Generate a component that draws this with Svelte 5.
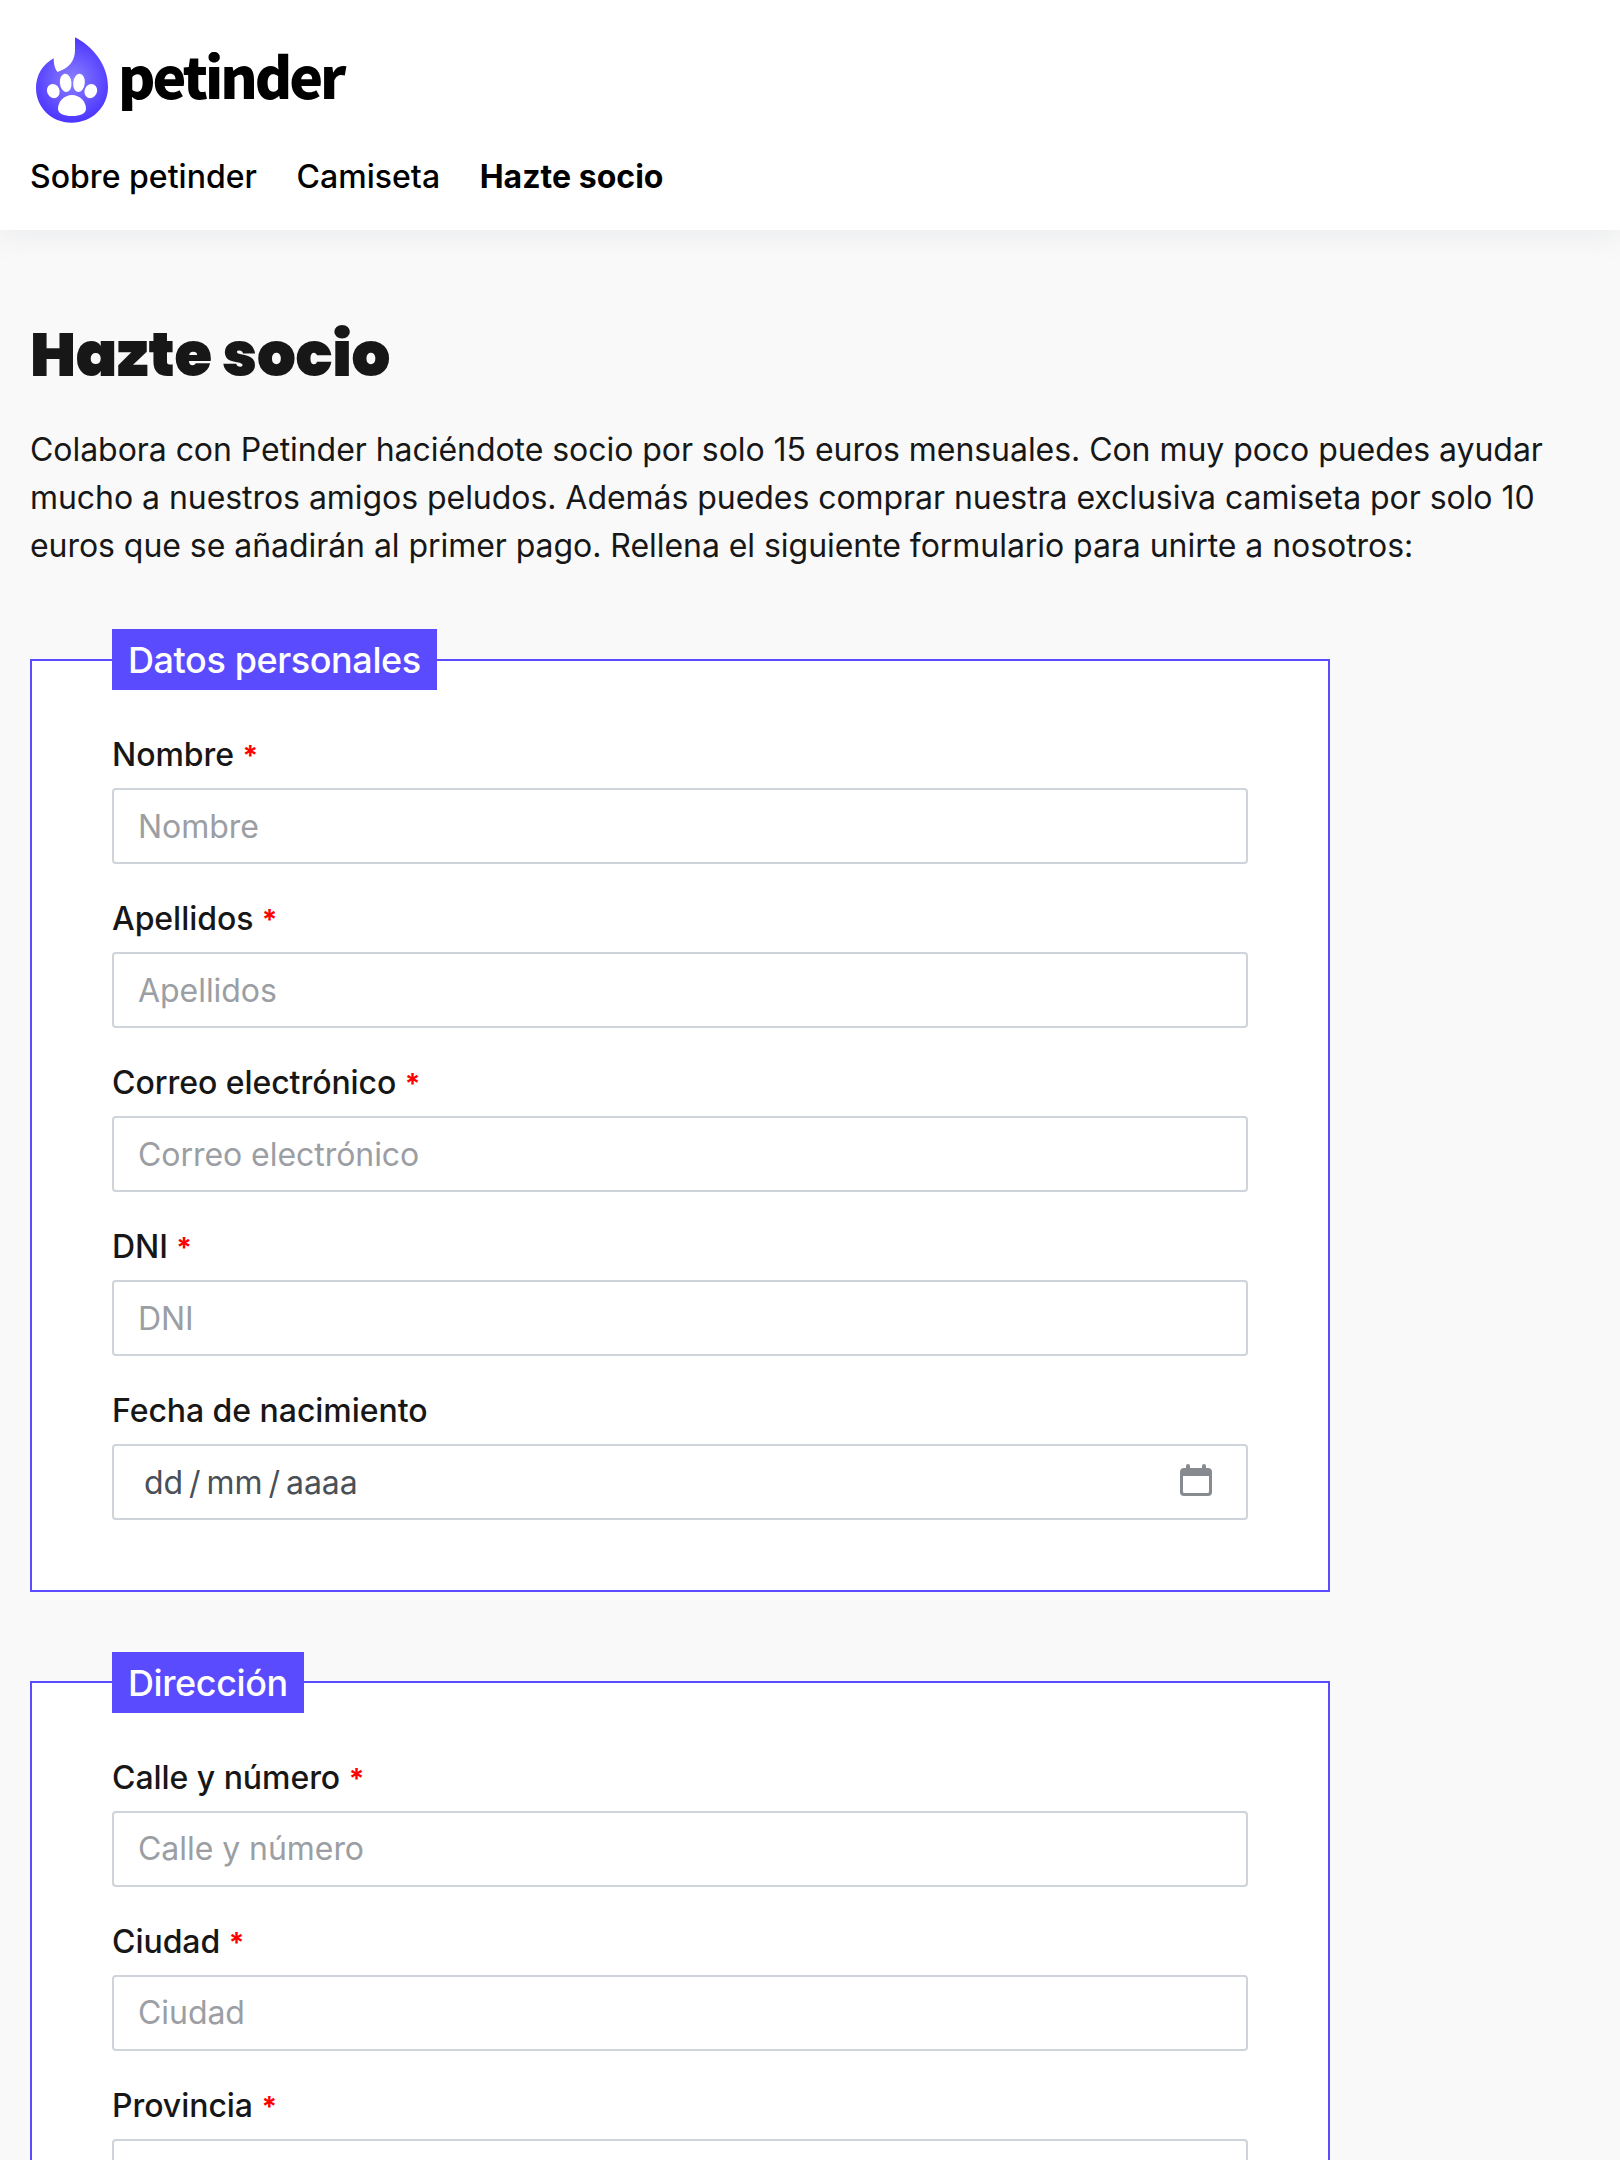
<script>
  const nav = [
    { label: 'Sobre petinder', active: false },
    { label: 'Camiseta', active: false },
    { label: 'Hazte socio', active: true },
  ];
  const groups = [
    {
      title: 'Datos personales',
      fields: [
        { label: 'Nombre', required: true },
        { label: 'Apellidos', required: true },
        { label: 'Correo electrónico', required: true },
        { label: 'DNI', required: true },
        { label: 'Fecha de nacimiento', required: false, date: true },
      ],
    },
    {
      title: 'Dirección',
      fields: [
        { label: 'Calle y número', required: true },
        { label: 'Ciudad', required: true },
        { label: 'Provincia', required: true },
      ],
    },
  ];
</script>

<div class="page">
  <header>
    <svg class="logo" width="330" height="100" viewBox="30 30 330 100" role="img" aria-label="petinder">
      <defs>
        <radialGradient id="flame" gradientUnits="userSpaceOnUse" cx="72" cy="80" r="44">
          <stop offset="0" stop-color="#8b80ff" />
          <stop offset="1" stop-color="#4a33ff" />
        </radialGradient>
      </defs>
      <path
        fill="url(#flame)"
        d="M75 37.3C92 46 108 64 108 87C108 107 92 122.7 71.5 122.7C51 122.7 36 107 36 88C36 75 43 64 53.7 58.3C53.7 63 54.500 68.500 57.500 72C69 68 75 61 75 50Z"
      />
      <g fill="#fff">
        <ellipse cx="53.300" cy="91.100" rx="6.200" ry="7.300" transform="rotate(-24 53.300 91.100)" />
        <ellipse cx="65.700" cy="82.900" rx="5.800" ry="9.200" transform="rotate(-6 65.700 82.900)" />
        <ellipse cx="79" cy="82.900" rx="5.800" ry="9.200" transform="rotate(6 79 82.900)" />
        <ellipse cx="90.800" cy="91.100" rx="6.200" ry="7.300" transform="rotate(24 90.800 91.100)" />
        <path d="M72 95C80 95 86 102 86 108.500C86 114 80 116 72 116C64 116 58 114 58 108.500C58 102 64 95 72 95Z" />
      </g>
      <text class="wordmark" x="118" y="98.700" textLength="228.500" lengthAdjust="spacing">petinder</text>
    </svg>
    <nav>
      {#each nav as item}
        <a href="#top" class:active={item.active}>{item.label}</a>
      {/each}
    </nav>
  </header>

  <main>
    <h1>Hazte socio</h1>
    <p>
      Colabora con Petinder haciéndote socio por solo 15 euros mensuales. Con muy poco puedes ayudar
      mucho a nuestros amigos peludos. Además puedes comprar nuestra exclusiva camiseta por solo 10
      euros que se añadirán al primer pago. Rellena el siguiente formulario para unirte a nosotros:
    </p>
    <form>
      {#each groups as group}
        <fieldset>
          <legend>{group.title}</legend>
          {#each group.fields as field}
            <label>
              <span class="name">{field.label}{#if field.required}&nbsp;<b>*</b>{/if}</span>
              {#if field.date}
                <span class="control date">
                  <span class="parts"><i>dd</i><i>/</i><i>mm</i><i>/</i><i>aaaa</i></span>
                  <svg width="32" height="32" viewBox="0 0 32 32" aria-hidden="true">
                    <path
                      fill="#878b90"
                      fill-rule="evenodd"
                      d="M6 4V2a2 2 0 0 1 4 0V4H22V2a2 2 0 0 1 4 0V4H28a4 4 0 0 1 4 4V28a4 4 0 0 1-4 4H4a4 4 0 0 1-4-4V8a4 4 0 0 1 4-4ZM3 12V27.500a1.500 1.500 0 0 0 1.500 1.500H27.500a1.500 1.500 0 0 0 1.500-1.500V12Z"
                    />
                  </svg>
                </span>
              {:else}
                <input class="control" type="text" placeholder={field.label} />
              {/if}
            </label>
          {/each}
        </fieldset>
      {/each}
    </form>
  </main>
</div>

<style>
  :global(body) {
    margin: 0;
    background: #f9f9f9;
  }
  .page {
    box-sizing: border-box;
    height: 2160px;
    overflow: hidden;
    background: #f9f9f9;
    color: #171717;
    font: 400 32px/48px Inter, sans-serif;
    letter-spacing: -0.05px;
  }
  header {
    box-sizing: border-box;
    height: 230px;
    padding: 30px 30px 0;
    background: #fff;
    box-shadow: 0 8px 24px rgba(149, 157, 175, 0.12);
  }
  .logo {
    display: block;
  }
  .wordmark {
    font: 900 57px 'Noto Sans CJK JP', sans-serif;
    fill: #000;
  }
  nav {
    display: flex;
    gap: 39.5px;
    padding-top: 23px;
    letter-spacing: 0.03px;
  }
  nav a {
    color: #000;
    font-weight: 500;
    text-decoration: none;
  }
  nav a.active {
    font-weight: 700;
  }
  main {
    padding: 85px 30px 0;
  }
  h1 {
    margin: 0;
    font: 900 61px/80px Poppins, Inter, sans-serif;
    letter-spacing: -0.3px;
  }
  p {
    width: 1530px;
    margin: 31px 0 0;
  }
  form {
    padding-top: 59px;
  }
  fieldset {
    box-sizing: border-box;
    width: 1300px;
    min-width: 0;
    margin: 0 0 59.8px;
    padding: 41px 80px 70px;
    border: 2px solid #5a4bff;
    background: #fff;
  }
  legend {
    box-sizing: border-box;
    height: 61px;
    padding: 0 16px;
    background: #5a4bff;
    color: #fff;
    font-size: 36px;
    font-weight: 500;
    line-height: 62px;
    letter-spacing: -0.4px;
  }
  label {
    display: block;
  }
  label + label {
    margin-top: 31px;
  }
  .name {
    display: block;
    height: 48px;
    margin-bottom: 9px;
    font-weight: 500;
  }
  .name b {
    color: #f00;
    font-size: 28px;
    font-weight: 700;
    line-height: 1;
  }
  .control {
    box-sizing: border-box;
    display: block;
    width: 100%;
    height: 76px;
    padding: 0 24px;
    border: 2px solid #ced4da;
    border-radius: 4px;
    background: #fff;
    color: #495057;
    font: 400 32px/48px Inter, sans-serif;
    letter-spacing: -0.05px;
  }
  .control::placeholder {
    color: #9b9ea3;
    opacity: 1;
  }
  .date {
    display: flex;
    align-items: center;
    justify-content: space-between;
    padding: 0 34px 0 30px;
  }
  .date svg {
    margin-bottom: 4px;
  }
  .parts {
    display: flex;
    gap: 6px;
    padding-top: 1px;
  }
  .parts i {
    font-style: normal;
  }
</style>
